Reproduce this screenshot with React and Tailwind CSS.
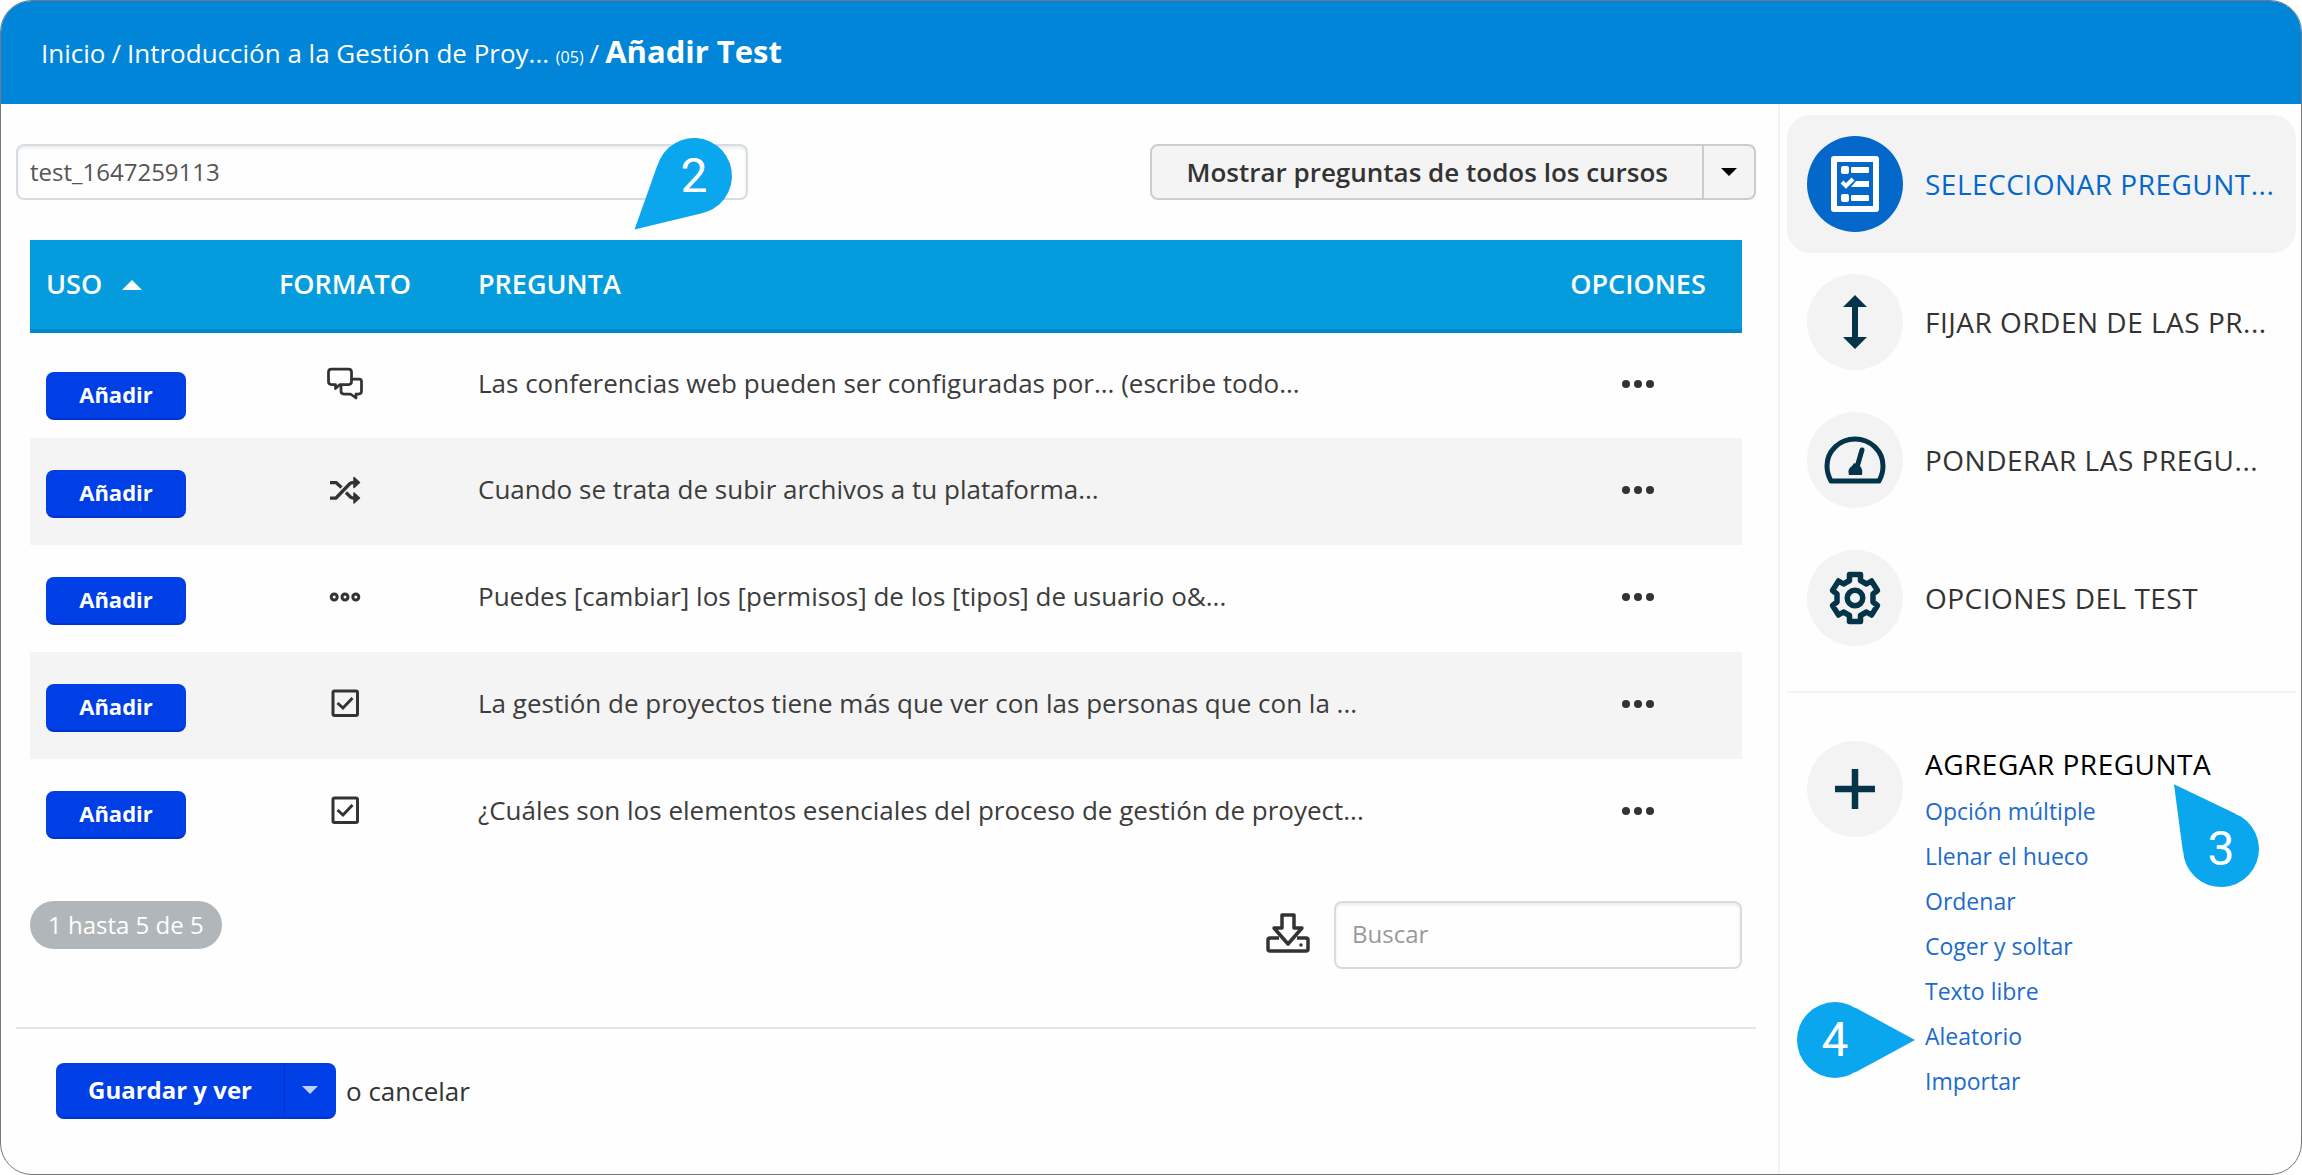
import { useState } from "react";

const ChatIcon = () => (
  <svg className="size-9" viewBox="0 0 36 36" fill="none" stroke="currentColor" strokeWidth="2.75" strokeLinejoin="round">
    <path d="M4.500 3h17q3 0 3 3v9.500q0 3-3 3H13l-4.500 4v-4h-4q-3 0-3-3V6q0-3 3-3z" />
    <path d="M25 13h7q2.500 0 2.500 2.500v9.500q0 3-3 3H29v4l-5.500-4H17q-3 0-3-3v-6" />
  </svg>
);

const ShuffleIcon = () => (
  <svg className="size-8" viewBox="0 0 32 32" fill="none" stroke="currentColor" strokeWidth="3.25" strokeLinejoin="round">
    <path d="M1 8.500h6l5.500 5M1 24h6L21 9.500q1-1 3-1h1M17 18.500l4.500 4.500q1 1 3 1h1" />
    <path d="M25 3.500l5.500 5-5.500 5zM25 19l5.500 5-5.500 5z" fill="currentColor" strokeWidth="1.500" />
  </svg>
);

const BlanksIcon = () => (
  <svg className="size-8" viewBox="0 0 32 32" fill="none" stroke="currentColor" strokeWidth="3">
    <circle cx="5.200" cy="16" r="3" />
    <circle cx="16" cy="16" r="3" />
    <circle cx="26.800" cy="16" r="3" />
  </svg>
);

const CheckIcon = () => (
  <svg className="size-8" viewBox="0 0 32 32" fill="none" stroke="currentColor" strokeWidth="3">
    <rect x="4" y="3" width="24.500" height="24.500" rx="1.500" />
    <path d="M8.500 15l5.500 5 9.500-10" />
  </svg>
);

const DownloadIcon = () => (
  <svg className="h-10 w-11" viewBox="0 0 44 40" fill="none" stroke="currentColor" strokeWidth="3.500" strokeLinejoin="round">
    <path d="M16 2h12v13h8L22 31 8 15h8z" />
    <path d="M13 25H4q-2 0-2 2v9q0 2 2 2h36q2 0 2-2v-9q0-2-2-2h-9" />
    <circle cx="35" cy="32" r="1.750" fill="currentColor" stroke="none" />
  </svg>
);

const SelectIcon = () => (
  <svg className="h-14 w-12" viewBox="0 0 48 56" fill="currentColor">
    <path fillRule="evenodd" d="M3 0h42q3 0 3 3v50q0 3-3 3H3q-3 0-3-3V3q0-3 3-3zm3 6v44h36V6z" />
    <rect x="10" y="10" width="8" height="8" rx="2" />
    <rect x="20" y="11" width="18" height="6" rx="1" />
    <path d="M25 25h13v6H20z" />
    <path d="M11 26l4 4 7-7" fill="none" stroke="currentColor" strokeWidth="4" />
    <rect x="10" y="38" width="8" height="8" rx="2" />
    <rect x="20" y="39" width="18" height="6" rx="1" />
  </svg>
);

const OrderIcon = () => (
  <svg className="h-14 w-6" viewBox="0 0 24 56" fill="currentColor">
    <path d="M12 1l12 12h-9v30h9L12 55 0 43h9V13H0z" />
  </svg>
);

const GaugeIcon = () => (
  <svg className="h-12 w-16" viewBox="0 0 64 48" fill="none" stroke="currentColor" strokeWidth="5" strokeLinejoin="round">
    <path d="M8 45q-4-7-4-15a28 27 0 0 1 56 0q0 8-4 15z" />
    <path d="M39 14l-5 17" strokeLinecap="round" />
    <path d="M31 27l6 3q3 3 2 9H26q-2-6 3-9z" fill="currentColor" stroke="none" />
  </svg>
);

const GearIcon = () => (
  <svg className="size-14" viewBox="0 0 56 56" fill="none" stroke="currentColor" strokeWidth="5.500" strokeLinejoin="round">
    <path d="M22.500 4.500h11v6l6 3.500 5-3 6 9.500-4.500 3.500v8l4.500 3.500-6 9.500-5-3-6 3.500v6h-11v-6l-6-3.500-5 3-6-9.500 4.500-3.500v-8l-4.500-3.500 6-9.500 5 3 6-3.500z" />
    <circle cx="28" cy="28" r="7.750" />
  </svg>
);

const PlusIcon = () => (
  <svg className="size-10" viewBox="0 0 40 40" stroke="currentColor" strokeWidth="6.500">
    <path d="M20 0v40M0 20h40" />
  </svg>
);

const Caret = ({ className, up = false }) => (
  <svg className={className} viewBox="0 0 20 10" fill="currentColor">
    <path d={up ? "M0 10L10 0l10 10z" : "M0 0h20L10 10z"} />
  </svg>
);

// Drop-shaped marker, the tip points right at angle 0
const Callout = ({ number, angle, className }) => (
  <div className={`pointer-events-none absolute flex size-19 items-center justify-center ${className}`}>
    <svg className="absolute inset-0 size-19 overflow-visible text-[#0aa6ee]" viewBox="-38 -38 76 76" fill="currentColor">
      <g transform={`rotate(${angle})`}>
        <circle r="38" />
        <path d="M20 -32.500L80 0L20 32.500z" />
      </g>
    </svg>
    <span className="relative font-[Roboto,sans-serif] text-5xl font-normal text-white">{number}</span>
  </div>
);

const questions = [
  { icon: <ChatIcon />, format: "Texto libre", text: "Las conferencias web pueden ser configuradas por... (escribe todo..." },
  { icon: <ShuffleIcon />, format: "Coger y soltar", text: "Cuando se trata de subir archivos a tu plataforma..." },
  { icon: <BlanksIcon />, format: "Llenar el hueco", text: "Puedes [cambiar] los [permisos] de los [tipos] de usuario o&..." },
  { icon: <CheckIcon />, format: "Opción múltiple", text: "La gestión de proyectos tiene más que ver con las personas que con la ..." },
  { icon: <CheckIcon />, format: "Opción múltiple", text: "¿Cuáles son los elementos esenciales del proceso de gestión de proyect..." },
];

const steps = [
  { icon: <SelectIcon />, label: "SELECCIONAR PREGUNT...", active: true },
  { icon: <OrderIcon />, label: "FIJAR ORDEN DE LAS PR..." },
  { icon: <GaugeIcon />, label: "PONDERAR LAS PREGU..." },
  { icon: <GearIcon />, label: "OPCIONES DEL TEST" },
];

const questionTypes = [
  "Opción múltiple",
  "Llenar el hueco",
  "Ordenar",
  "Coger y soltar",
  "Texto libre",
  "Aleatorio",
  "Importar",
];

const Header = () => (
  <header className="bg-[#0085d8] px-10 text-white">
    <nav className="flex h-[103px] items-baseline gap-1.5 pt-[30px] text-[26px] leading-10">
      <a href="#inicio">Inicio</a>
      <span>/</span>
      <a href="#curso">
        Introducción a la Gestión de Proy... <span className="text-base">(05)</span>
      </a>
      <span>/</span>
      <h1 className="text-[31px] font-bold">Añadir Test</h1>
    </nav>
  </header>
);

const Toolbar = () => {
  const [name, setName] = useState("test_1647259113");

  return (
    <div className="flex items-center justify-between">
      <div className="relative w-[732px]">
        <input
          aria-label="Nombre del test"
          value={name}
          onChange={(e) => setName(e.target.value)}
          className="h-14 w-full rounded-lg border-2 border-[#d5dde2] px-3 pb-0.5 text-2xl text-[#555] shadow-[inset_0_2px_3px_rgba(0,0,0,0.08)]"
        />
        <Callout number={2} angle={138} className="-top-1.5 right-4" />
      </div>
      <div className="flex h-14 rounded-lg border-2 border-[#ccc] bg-[#f4f4f4]">
        <button className="px-[34px] text-[26px] font-semibold text-[#333]">
          Mostrar preguntas de todos los cursos
        </button>
        <button aria-label="Más cursos" className="flex w-13 items-center justify-center border-l-2 border-[#ccc] text-black">
          <Caret className="h-2 w-4" />
        </button>
      </div>
    </div>
  );
};

const QuestionTable = () => (
  <table className="w-full table-fixed text-left text-[26px] text-[#3c3c3c]">
    <thead>
      <tr className="h-[91px] border-b-4 border-[#0088c8] bg-[#059cdd] text-[27px] text-white">
        <th className="w-[214px] pl-4 font-semibold">
          <span className="flex items-center gap-5">
            USO <Caret up className="h-2.5 w-5" />
          </span>
        </th>
        <th className="w-[202px] text-center font-semibold">FORMATO</th>
        <th className="pl-8 font-semibold">PREGUNTA</th>
        <th className="w-[208px] text-center font-semibold">OPCIONES</th>
      </tr>
    </thead>
    <tbody>
      {questions.map((question) => (
        <tr key={question.text} className="group h-[107px] even:bg-[#f4f4f4]">
          <td className="pt-1 pl-4 group-first:pt-5">
            <button className="h-12 w-35 rounded-lg border-b-2 border-[#0034cc] bg-[#003ee6] text-[22px] font-bold text-white">
              Añadir
            </button>
          </td>
          <td className="pb-1">
            <span role="img" aria-label={question.format} className="flex justify-center text-[#333]">
              {question.icon}
            </span>
          </td>
          <td className="truncate pb-1 pl-8">{question.text}</td>
          <td className="pb-1">
            <button aria-label="Opciones" className="mx-auto flex gap-1 p-2">
              <span className="size-2 rounded-full bg-[#333]" />
              <span className="size-2 rounded-full bg-[#333]" />
              <span className="size-2 rounded-full bg-[#333]" />
            </button>
          </td>
        </tr>
      ))}
    </tbody>
  </table>
);

const TableFooter = () => (
  <div className="mt-[35px] flex items-start">
    <span className="flex h-12 items-center rounded-full bg-[#b0b6b9] px-[18px] text-2xl text-white">
      1 hasta 5 de 5
    </span>
    <button aria-label="Descargar" className="mt-3 ml-auto text-[#333]">
      <DownloadIcon />
    </button>
    <input
      aria-label="Buscar"
      placeholder="Buscar"
      className="ml-6 h-17 w-[408px] rounded-lg border-2 border-[#d5dde2] px-4 pb-1 text-2xl shadow-[inset_0_2px_3px_rgba(0,0,0,0.08)] placeholder:text-[#999]"
    />
  </div>
);

const Actions = () => (
  <div className="mt-[58px] flex items-center gap-2.5 border-t-2 border-[#e4e4e4] px-10 pt-[34px]">
    <div className="flex h-14 rounded-lg border-b-2 border-[#0034cc] bg-[#003ee6] text-white">
      <button className="px-8 text-2xl font-bold">Guardar y ver</button>
      <button aria-label="Más opciones" className="flex w-13 items-center justify-center border-l border-[#0034cc] text-[#bfcff9]">
        <Caret className="h-2 w-4" />
      </button>
    </div>
    <span className="text-[26px] text-[#333]">
      o <a href="#cancelar">cancelar</a>
    </span>
  </div>
);

const IconCircle = ({ active = false, children }) => (
  <span
    className={`flex size-24 shrink-0 items-center justify-center rounded-full ${
      active ? "bg-[#0468cb] text-white" : "bg-[#f3f3f3] text-[#04344a]"
    }`}
  >
    {children}
  </span>
);

const Sidebar = () => (
  <aside className="w-[523px] shrink-0 border-l-2 border-[#f2f2f2] pt-[11px] pr-[5px] pl-[7px]">
    <nav className="border-b-2 border-[#f2f2f2] pb-6">
      {steps.map((step) => (
        <a
          key={step.label}
          href="#paso"
          className={`flex h-[138px] items-center gap-[22px] rounded-3xl pl-5 text-[28px] font-medium tracking-[0.5px] whitespace-nowrap ${
            step.active ? "bg-[#f3f3f3] text-[#0468cb]" : "text-[#333]"
          }`}
        >
          <IconCircle active={step.active}>{step.icon}</IconCircle>
          {step.label}
        </a>
      ))}
    </nav>
    <section className="flex items-start gap-[22px] pt-12 pl-5">
      <IconCircle>
        <PlusIcon />
      </IconCircle>
      <div>
        <h2 className="relative text-[28px] leading-[46px] font-medium tracking-[0.5px] whitespace-nowrap text-black">
          AGREGAR PREGUNTA
          <Callout number={3} angle={-126} className="top-[70px] -right-12" />
        </h2>
        <ul className="mt-0.5 text-[23px] leading-[45px] text-[#1d6bcd]">
          {questionTypes.map((type) => (
            <li key={type} className="relative">
              <a href="#tipo">{type}</a>
              {type === "Aleatorio" && <Callout number={4} angle={0} className="-top-3 -left-32" />}
            </li>
          ))}
        </ul>
      </div>
    </section>
  </aside>
);

export default function App() {
  return (
    <div className="flex min-h-screen flex-col overflow-hidden rounded-[32px] border border-[#777] bg-[#fefefe] font-['Open_Sans',sans-serif]">
      <Header />
      <div className="flex grow">
        <main className="min-w-0 grow pt-10 pr-[22px] pl-[15px]">
          <Toolbar />
          <div className="mt-10 px-3.5">
            <QuestionTable />
            <TableFooter />
          </div>
          <Actions />
        </main>
        <Sidebar />
      </div>
    </div>
  );
}
